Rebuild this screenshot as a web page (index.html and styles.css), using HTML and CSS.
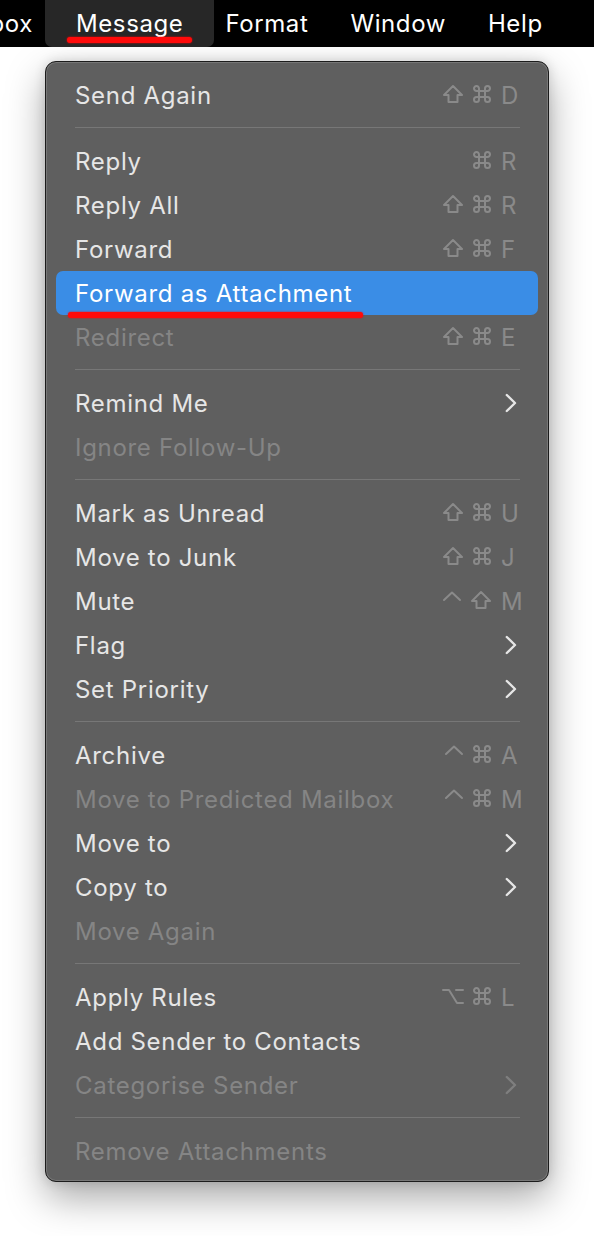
FILE: index.html
```html
<!DOCTYPE html>
<html lang="en">
<head>
  <meta charset="UTF-8" />
  <meta name="viewport" content="width=device-width, initial-scale=1.0"/>
  <title>Message menu</title>
  <link rel="stylesheet" href="styles.css">
</head>
<body>
  <!-- key glyphs, reused below -->
  <svg class="defs" width="0" height="0" aria-hidden="true">
    <symbol id="shift" viewBox="0 0 22 20"><path d="M11 2 L20 11 H15.5 V18 H6.5 V11 H2 Z"/></symbol>
    <symbol id="cmd" viewBox="0 0 20 20"><path d="M7 7 V4.5 A2.5 2.5 0 1 0 4.5 7 H15.5 A2.5 2.5 0 1 0 13 4.5 V15.5 A2.5 2.5 0 1 0 15.5 13 H4.5 A2.5 2.5 0 1 0 7 15.5 Z"/></symbol>
    <symbol id="ctrl" viewBox="0 0 20 20"><path d="M2 10 L10 2.5 L18 10"/></symbol>
    <symbol id="opt" viewBox="0 0 22 20"><path d="M1 4 H7 L15 17 H21 M14 4 H21"/></symbol>
    <symbol id="more" viewBox="0 0 12 20"><path d="M1.8 2 L10 10 L1.8 18"/></symbol>
  </svg>

  <!-- Menu bar -->
  <div class="menubar">
    <span class="bar-item cut"><span>Mailbox</span></span>
    <span class="bar-item active">Message</span>
    <span class="bar-item">Format</span>
    <span class="bar-item">Window</span>
    <span class="bar-item">Help</span>
  </div>

  <!-- Dropdown -->
  <div class="menu">
    <div class="row"><span class="label">Send Again</span><span class="keys"><svg class="k wide"><use href="#shift"/></svg><svg class="k"><use href="#cmd"/></svg><span class="key">D</span></span></div>
    <div class="sep"></div>
    <div class="row"><span class="label">Reply</span><span class="keys"><svg class="k"><use href="#cmd"/></svg><span class="key">R</span></span></div>
    <div class="row"><span class="label">Reply All</span><span class="keys"><svg class="k wide"><use href="#shift"/></svg><svg class="k"><use href="#cmd"/></svg><span class="key">R</span></span></div>
    <div class="row"><span class="label">Forward</span><span class="keys"><svg class="k wide"><use href="#shift"/></svg><svg class="k"><use href="#cmd"/></svg><span class="key">F</span></span></div>
    <div class="row selected"><span class="label">Forward as Attachment</span></div>
    <div class="row off"><span class="label">Redirect</span><span class="keys"><svg class="k wide"><use href="#shift"/></svg><svg class="k"><use href="#cmd"/></svg><span class="key">E</span></span></div>
    <div class="sep"></div>
    <div class="row"><span class="label">Remind Me</span><svg class="more"><use href="#more"/></svg></div>
    <div class="row off"><span class="label">Ignore Follow-Up</span></div>
    <div class="sep"></div>
    <div class="row"><span class="label">Mark as Unread</span><span class="keys"><svg class="k wide"><use href="#shift"/></svg><svg class="k"><use href="#cmd"/></svg><span class="key">U</span></span></div>
    <div class="row"><span class="label">Move to Junk</span><span class="keys"><svg class="k wide"><use href="#shift"/></svg><svg class="k"><use href="#cmd"/></svg><span class="key">J</span></span></div>
    <div class="row"><span class="label">Mute</span><span class="keys"><svg class="k"><use href="#ctrl"/></svg><svg class="k wide"><use href="#shift"/></svg><span class="key">M</span></span></div>
    <div class="row"><span class="label">Flag</span><svg class="more"><use href="#more"/></svg></div>
    <div class="row"><span class="label">Set Priority</span><svg class="more"><use href="#more"/></svg></div>
    <div class="sep"></div>
    <div class="row"><span class="label">Archive</span><span class="keys"><svg class="k"><use href="#ctrl"/></svg><svg class="k"><use href="#cmd"/></svg><span class="key">A</span></span></div>
    <div class="row off"><span class="label">Move to Predicted Mailbox</span><span class="keys"><svg class="k"><use href="#ctrl"/></svg><svg class="k"><use href="#cmd"/></svg><span class="key">M</span></span></div>
    <div class="row"><span class="label">Move to</span><svg class="more"><use href="#more"/></svg></div>
    <div class="row"><span class="label">Copy to</span><svg class="more"><use href="#more"/></svg></div>
    <div class="row off"><span class="label">Move Again</span></div>
    <div class="sep"></div>
    <div class="row"><span class="label">Apply Rules</span><span class="keys"><svg class="k wide"><use href="#opt"/></svg><svg class="k"><use href="#cmd"/></svg><span class="key">L</span></span></div>
    <div class="row"><span class="label">Add Sender to Contacts</span></div>
    <div class="row off"><span class="label">Categorise Sender</span><svg class="more"><use href="#more"/></svg></div>
    <div class="sep"></div>
    <div class="row off"><span class="label">Remove Attachments</span></div>
  </div>
</body>
</html>
```

FILE: styles.css
```css
body {
  margin: 0;
  padding-bottom: 60px;
  background: #fff;
  font-family: Inter, "Noto Sans", sans-serif;
  font-size: 24px;
  letter-spacing: 0.7px;
}
.defs {
  position: absolute;
}

.menubar {
  display: flex;
  align-items: stretch;
  height: 47px;
  background: #000;
  color: #fff;
  letter-spacing: 0.6px;
  overflow: hidden;
}
.bar-item {
  display: flex;
  align-items: center;
  padding: 0 21px;
  white-space: nowrap;
}
.bar-item.cut {
  width: 33px;
  padding: 0;
  justify-content: flex-end;
  overflow: hidden;
}
.bar-item.active {
  position: relative;
  padding: 0 31px;
  margin: 0 -10px 0 12px;
  background: #272727;
  border-radius: 0 0 7px 7px;
}

/* red marker lines */
.bar-item.active::after,
.row.selected::after {
  content: "";
  position: absolute;
  height: 6px;
  border-radius: 3px;
  background: #ff0a0a;
  box-shadow: 0 0 2px #ff0000;
}
.bar-item.active::after {
  left: 22px;
  right: 22px;
  bottom: 4px;
}
.row.selected::after {
  left: 12px;
  width: 295px;
  bottom: -3px;
}

.menu {
  box-sizing: border-box;
  width: 504px;
  margin: 14px 0 0 45px;
  padding: 11px 10px 8px;
  background: #5f5f5f;
  border: 1px solid #1c1c1c;
  border-radius: 11px;
  box-shadow: inset 0 0 0 1px #777, 0 16px 38px rgba(0, 0, 0, 0.34), 0 0 12px rgba(0, 0, 0, 0.14);
  color: #e6e6e6;
}
.row {
  position: relative;
  display: flex;
  align-items: center;
  height: 44px;
  padding: 0 16px 0 19px;
  border-radius: 7px;
}
.row .label {
  flex: 1;
}
.row.off {
  color: #858585;
}
.row.selected {
  background: #3a8de6;
  color: #fff;
}
.keys {
  display: flex;
  align-items: center;
  gap: 8px;
  color: #8a8a8a;
}
.k {
  width: 20px;
  height: 20px;
  margin-top: -2px;
  fill: none;
  stroke: currentColor;
  stroke-width: 2;
  stroke-linejoin: round;
  stroke-linecap: round;
}
.k.wide {
  width: 22px;
}
.key {
  width: 21px;
  margin-left: 1px;
  letter-spacing: 0;
}
.more {
  width: 12px;
  height: 20px;
  margin-right: 5px;
  fill: none;
  stroke: currentColor;
  stroke-width: 2.4;
  stroke-linecap: round;
  stroke-linejoin: round;
}
.row.off .more {
  color: #7f7f7f;
}
.sep {
  height: 1px;
  margin: 10px 18px 11px 19px;
  background: #777;
}
```
